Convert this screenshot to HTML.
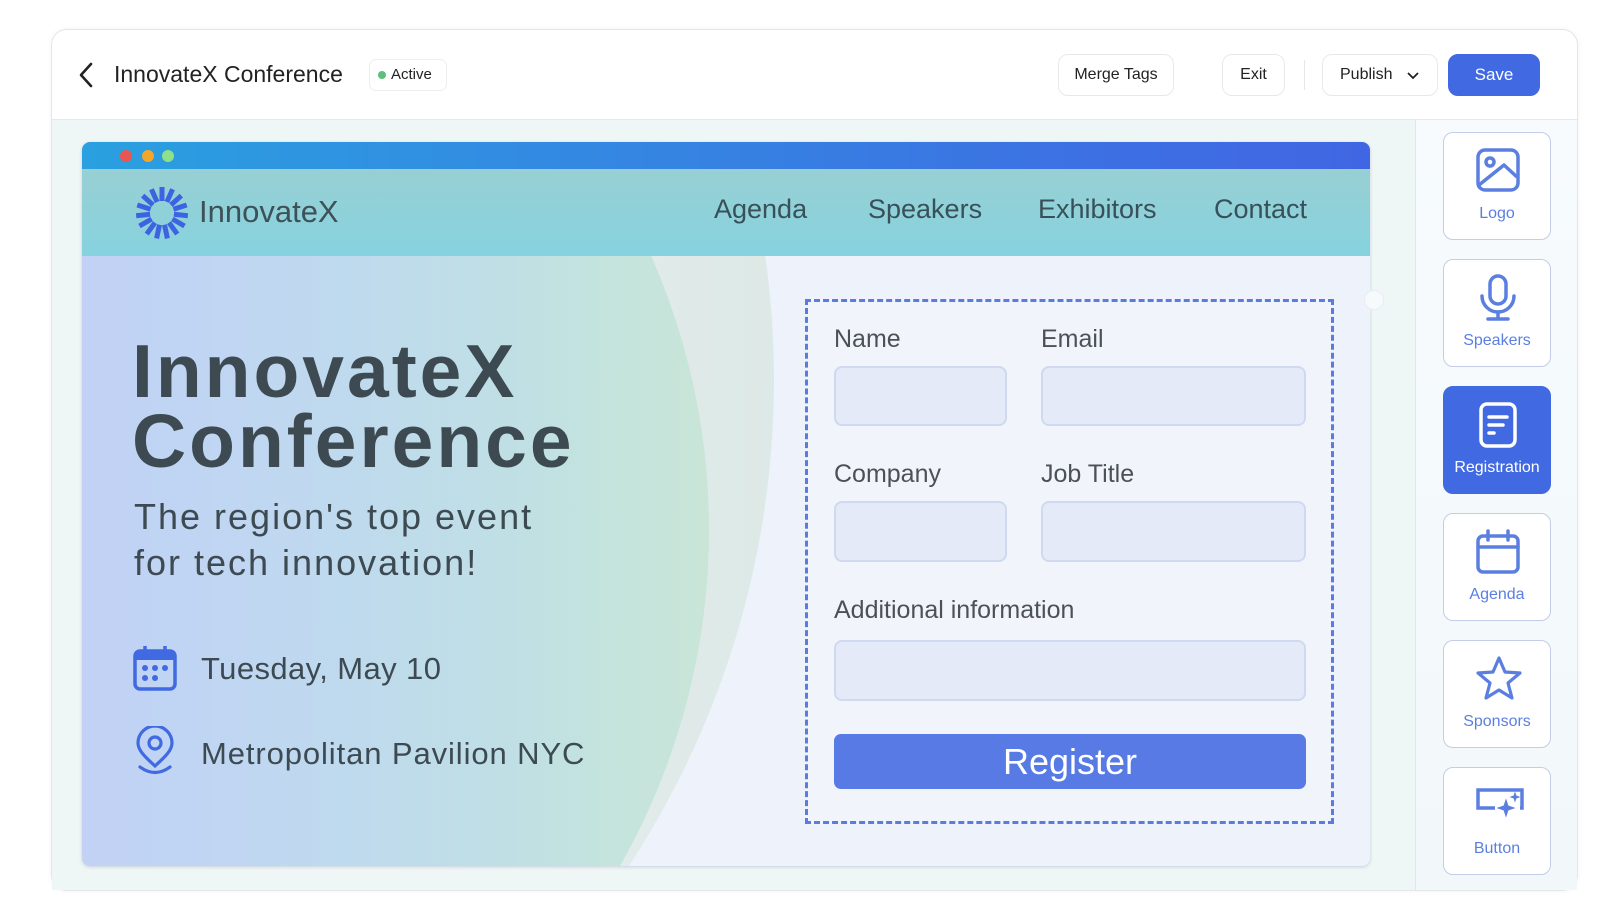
<!DOCTYPE html>
<html><head><meta charset="utf-8"><style>
*{box-sizing:border-box;margin:0;padding:0}
html,body{width:1611px;height:907px;overflow:hidden}
body{background:#fff;font-family:"Liberation Sans",sans-serif;position:relative;color:#222}
.a{position:absolute}
.card{left:51px;top:29px;width:1527px;height:862px;border:1px solid #e2e8ea;border-radius:16px;background:#fff;overflow:hidden;box-shadow:0 0 6px rgba(0,0,0,.05)}
.btn{position:absolute;top:54px;height:42px;border:1px solid #e6e9ec;border-radius:10px;background:#fff;font-size:16px;color:#222;display:flex;align-items:center;justify-content:center}
.nav{font-size:27px;color:#38505a;top:194px}
.lbl{font-size:25px;color:#4a5257}
.inp{background:#e4eaf8;border:2px solid #cfd9ef;border-radius:8px}
.tile{position:absolute;left:1443px;width:108px;height:108px;border:1.5px solid #c3cde8;border-radius:10px;background:#fff;color:#5b7fe0;font-size:16px;text-align:center}
.tile svg{position:absolute;left:31px;top:14px}
.tile span{position:absolute;left:0;right:0;top:72px}
</style></head><body>
<div class="a card"></div>
<svg class="a" style="left:76px;top:62px" width="20" height="26" viewBox="0 0 20 26"><path d="M15 2 L5 13 L15 24" fill="none" stroke="#222" stroke-width="2.6" stroke-linecap="round" stroke-linejoin="round"/></svg>
<div class="a" style="left:114px;top:61px;font-size:23px;color:#222">InnovateX Conference</div>
<div class="a" style="left:369px;top:59px;width:78px;height:32px;border:1px solid #eceef0;border-radius:7px;font-size:15px;line-height:30px;padding-left:21px;color:#222">Active</div>
<div class="a" style="left:378px;top:71px;width:8px;height:8px;border-radius:50%;background:#5cbf7a"></div>
<div class="btn" style="left:1058px;width:116px">Merge Tags</div>
<div class="btn" style="left:1222px;width:63px">Exit</div>
<div class="a" style="left:1304px;top:60px;width:1px;height:30px;background:#e5e8ea"></div>
<div class="btn" style="left:1322px;width:116px;justify-content:flex-start;padding-left:17px">Publish<svg style="margin-left:14px" width="14" height="9" viewBox="0 0 14 9"><path d="M2 2 L7 7 L12 2" fill="none" stroke="#222" stroke-width="1.8"/></svg></div>
<div class="btn" style="left:1448px;width:92px;background:#4169e1;border-color:#4169e1;color:#fff;font-size:17px">Save</div>
<div class="a" style="left:52px;top:119px;width:1363px;height:771px;background:#eef6f6;border-top:1px solid #e0eaf0"></div>
<div class="a" style="left:1415px;top:119px;width:162px;height:771px;background:linear-gradient(#f7fbfd,#f2f8fa);border-left:1px solid #dfe8ee;border-top:1px solid #e0eaf0"></div>
<div class="a" style="left:82px;top:142px;width:1288px;height:724px;border-radius:8px;overflow:hidden;background:#eef2fb;box-shadow:0 1px 3px rgba(80,100,140,.25)">
 <div class="a" style="left:0;top:0;width:1288px;height:27px;background:linear-gradient(90deg,#2aa0e0,#3d6fe3 80%,#4166e3)"></div>
 <div class="a" style="left:38px;top:8px;width:12px;height:12px;border-radius:50%;background:#e9564f"></div>
 <div class="a" style="left:60px;top:8px;width:12px;height:12px;border-radius:50%;background:#f4a62a"></div>
 <div class="a" style="left:80px;top:8px;width:12px;height:12px;border-radius:50%;background:#8fe08a"></div>
 <div class="a" style="left:0;top:27px;width:1288px;height:87px;background:linear-gradient(180deg,#98d0d3,#86d2df)"></div>
 <div class="a" style="left:0;top:114px;width:1288px;height:610px;overflow:hidden">
  <div class="a" style="left:-1080px;top:-762px;width:1772px;height:1772px;border-radius:50%;background:linear-gradient(90deg,#e6eef0 80%,#dde9e6)"></div>
  <div class="a" style="left:-729px;top:-404px;width:1356px;height:1356px;border-radius:50%;background:linear-gradient(90deg,#b8e2f0 60%,#bfe2e2 85%,#c9e5d8)"></div>
  <div class="a" style="left:0;top:0;width:520px;height:610px;background:linear-gradient(90deg,rgba(196,205,245,.8),rgba(190,215,245,0))"></div>
 </div>
</div>
<svg class="a" style="left:134px;top:185px" width="56" height="56" viewBox="-28 -28 56 56">
<g stroke="#3d63e0" stroke-width="5">
<line x1="0" y1="-12" x2="0" y2="-26" transform="rotate(0)"/><line x1="0" y1="-12" x2="0" y2="-26" transform="rotate(24)"/><line x1="0" y1="-12" x2="0" y2="-26" transform="rotate(48)"/><line x1="0" y1="-12" x2="0" y2="-26" transform="rotate(72)"/><line x1="0" y1="-12" x2="0" y2="-26" transform="rotate(96)"/><line x1="0" y1="-12" x2="0" y2="-26" transform="rotate(120)"/><line x1="0" y1="-12" x2="0" y2="-26" transform="rotate(144)"/><line x1="0" y1="-12" x2="0" y2="-26" transform="rotate(168)"/><line x1="0" y1="-12" x2="0" y2="-26" transform="rotate(192)"/><line x1="0" y1="-12" x2="0" y2="-26" transform="rotate(216)"/><line x1="0" y1="-12" x2="0" y2="-26" transform="rotate(240)"/><line x1="0" y1="-12" x2="0" y2="-26" transform="rotate(264)"/><line x1="0" y1="-12" x2="0" y2="-26" transform="rotate(288)"/><line x1="0" y1="-12" x2="0" y2="-26" transform="rotate(312)"/><line x1="0" y1="-12" x2="0" y2="-26" transform="rotate(336)"/></g></svg>
<div class="a" style="left:199px;top:194px;font-size:31px;color:#3e5058">InnovateX</div>
<div class="a nav" style="left:714px">Agenda</div>
<div class="a nav" style="left:868px">Speakers</div>
<div class="a nav" style="left:1038px">Exhibitors</div>
<div class="a nav" style="left:1214px">Contact</div>
<div class="a" style="left:132px;top:336px;font-size:75px;font-weight:bold;line-height:70px;color:#3d4a52;letter-spacing:3px">InnovateX<br>Conference</div>
<div class="a" style="left:134px;top:494px;font-size:36px;line-height:46px;color:#3d4a52;letter-spacing:2px">The region's top event<br>for tech innovation!</div>
<svg class="a" style="left:133px;top:645px" width="44" height="46" viewBox="0 0 44 46"><rect x="2" y="6" width="40" height="38" rx="5" fill="none" stroke="#4169e1" stroke-width="3.5"/><rect x="2" y="6" width="40" height="9" fill="#4169e1"/><line x1="12" y1="1" x2="12" y2="9" stroke="#4169e1" stroke-width="3.5"/><line x1="32" y1="1" x2="32" y2="9" stroke="#4169e1" stroke-width="3.5"/><g fill="#4169e1"><circle cx="12" cy="23" r="3"/><circle cx="22" cy="23" r="3"/><circle cx="32" cy="23" r="3"/><circle cx="12" cy="33" r="3"/><circle cx="22" cy="33" r="3"/></g></svg>
<div class="a" style="left:201px;top:651px;font-size:31px;color:#3d4a52;letter-spacing:.4px">Tuesday, May 10</div>
<svg class="a" style="left:134px;top:726px" width="42" height="50" viewBox="0 0 42 50"><path d="M21 40 C10 30 4 24 4 17 A17 17 0 0 1 38 17 C38 24 32 30 21 40Z" fill="none" stroke="#4169e1" stroke-width="3.2"/><circle cx="21" cy="17" r="6" fill="none" stroke="#4169e1" stroke-width="3.2"/><path d="M6 41 Q21 52 36 41" fill="none" stroke="#4169e1" stroke-width="3.2" stroke-linecap="round"/></svg>
<div class="a" style="left:201px;top:736px;font-size:31px;color:#3d4a52;letter-spacing:.9px">Metropolitan Pavilion NYC</div>
<div class="a" style="left:805px;top:299px;width:529px;height:525px;border:3px dashed #5a7be0;background:rgba(242,245,252,.85)"></div>
<div class="a" style="left:1364px;top:290px;width:20px;height:20px;border-radius:50%;border:1px solid #e8eef2;background:#f7fafc"></div>
<div class="a lbl" style="left:834px;top:325px">Name</div>
<div class="a lbl" style="left:1041px;top:325px">Email</div>
<div class="a inp" style="left:834px;top:366px;width:173px;height:60px"></div>
<div class="a inp" style="left:1041px;top:366px;width:265px;height:60px"></div>
<div class="a lbl" style="left:834px;top:460px">Company</div>
<div class="a lbl" style="left:1041px;top:460px">Job Title</div>
<div class="a inp" style="left:834px;top:501px;width:173px;height:61px"></div>
<div class="a inp" style="left:1041px;top:501px;width:265px;height:61px"></div>
<div class="a lbl" style="left:834px;top:596px">Additional information</div>
<div class="a inp" style="left:834px;top:640px;width:472px;height:61px"></div>
<div class="a" style="left:834px;top:734px;width:472px;height:55px;background:#577ae5;border-radius:7px;color:#fff;font-size:36px;text-align:center;line-height:55px">Register</div>
<div class="tile" style="top:132px"><svg width="46" height="46" viewBox="0 0 46 46" fill="none" stroke="#5b7fe0" stroke-width="3.5" stroke-linejoin="round"><rect x="3" y="3" width="40" height="40" rx="7"/><circle cx="15" cy="15" r="4"/><path d="M4 38 L29 18 L42 30"/></svg><span>Logo</span></div>
<div class="tile" style="top:259px"><svg width="46" height="50" viewBox="0 0 46 50" fill="none" stroke="#5b7fe0" stroke-width="3.5" stroke-linecap="round"><rect x="15" y="2" width="16" height="28" rx="8"/><path d="M7 22 A16 16 0 0 0 39 22"/><line x1="23" y1="38" x2="23" y2="44"/><line x1="13" y1="45" x2="33" y2="45"/></svg><span>Speakers</span></div>
<div class="tile" style="top:386px;background:#4169e1;border-color:#4169e1;color:#fff"><svg width="46" height="48" viewBox="0 0 46 48" fill="none" stroke="#fff" stroke-width="3.5" stroke-linecap="round"><rect x="6" y="3" width="34" height="42" rx="6"/><line x1="14" y1="16" x2="32" y2="16"/><line x1="14" y1="24" x2="28" y2="24"/><line x1="14" y1="32" x2="19" y2="32"/></svg><span>Registration</span></div>
<div class="tile" style="top:513px"><svg width="46" height="48" viewBox="0 0 46 48" fill="none" stroke="#5b7fe0" stroke-width="3.5" stroke-linecap="round"><rect x="3" y="8" width="40" height="36" rx="5"/><line x1="3" y1="19" x2="43" y2="19"/><line x1="13" y1="3" x2="13" y2="12"/><line x1="33" y1="3" x2="33" y2="12"/></svg><span>Agenda</span></div>
<div class="tile" style="top:640px"><svg width="48" height="46" viewBox="0 0 48 46" fill="none" stroke="#5b7fe0" stroke-width="3.2" stroke-linejoin="round"><path d="M24 3 L30 17 L45 18 L33 28 L37 43 L24 35 L11 43 L15 28 L3 18 L18 17Z"/></svg><span>Sponsors</span></div>
<div class="tile" style="top:767px"><svg width="50" height="40" viewBox="0 0 50 40" fill="none" stroke="#5b7fe0" stroke-width="3.5"><path d="M20 26 H3 V8 H47 V26 H45"/><path d="M31 18 L33 24 L39 26 L33 28 L31 34 L29 28 L23 26 L29 24Z" fill="#5b7fe0" stroke-width="1"/><path d="M40 11 L41 14 L44 15 L41 16 L40 19 L39 16 L36 15 L39 14Z" fill="#5b7fe0" stroke-width="1"/></svg><span>Button</span></div>
</body></html>
